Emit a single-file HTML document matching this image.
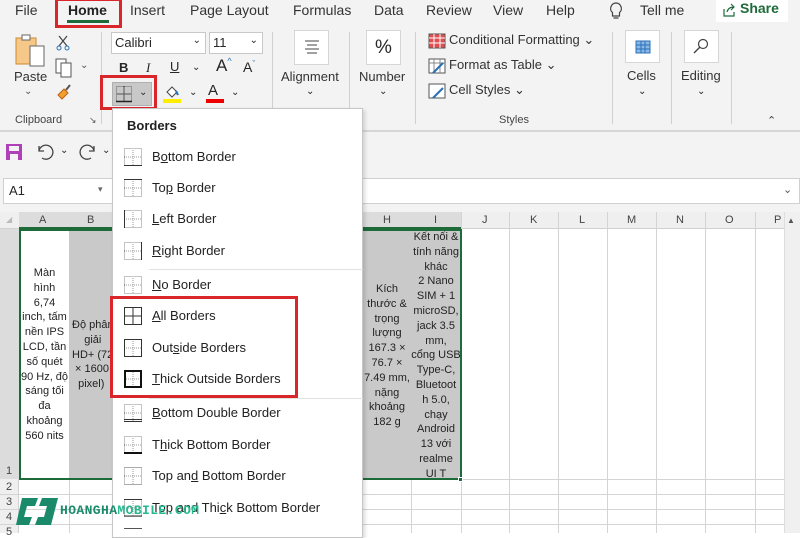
<!DOCTYPE html>
<html><head><meta charset="utf-8"><style>
*{margin:0;padding:0;box-sizing:border-box}
body{width:800px;height:533px;overflow:hidden;position:relative;background:#fff;font-family:"Segoe UI","Liberation Sans","DejaVu Sans",sans-serif;color:#262626}
.a{position:absolute}
.t{font-size:14px;color:#333}
.rb{border:3px solid #d9262b}
.cell{position:absolute;font-size:11px;line-height:14.8px;text-align:center;color:#222}
.mi{position:absolute;left:152px;font-size:13px;color:#222}
.ic{position:absolute;left:124px}
.grid{position:absolute;background:#d4d4d4}
</style></head><body>
<div class="a" style="left:0;top:0;width:800px;height:206px;background:#f3f3f3"></div>
<div class="a t" style="left:15px;top:2px">File</div>
<div class="a t" style="left:68px;top:2px;font-weight:bold;color:#222">Home</div>
<div class="a" style="left:67px;top:20px;width:42px;height:3px;background:#1e6b3a"></div>
<div class="a rb" style="left:55px;top:-2px;width:67px;height:30px"></div>
<div class="a t" style="left:130px;top:2px">Insert</div>
<div class="a t" style="left:190px;top:2px">Page Layout</div>
<div class="a t" style="left:293px;top:2px">Formulas</div>
<div class="a t" style="left:374px;top:2px">Data</div>
<div class="a t" style="left:426px;top:2px">Review</div>
<div class="a t" style="left:493px;top:2px">View</div>
<div class="a t" style="left:546px;top:2px">Help</div>
<svg class="a" style="left:609px;top:2px" width="14" height="18"><path d="M7 1a5.5 5.5 0 0 0-3.5 9.6V14h7v-3.4A5.5 5.5 0 0 0 7 1zM4.5 16h5" fill="none" stroke="#444" stroke-width="1.2"/></svg>
<div class="a t" style="left:640px;top:2px">Tell me</div>
<div class="a" style="left:716px;top:-2px;width:72px;height:24px;background:#fff;border-radius:2px"></div>
<svg class="a" style="left:722px;top:3px" width="14" height="14"><path d="M2 6v7h10V9M5 9c1-4 4-5 7-5M9 1l3 3-3 3" fill="none" stroke="#1e6b3a" stroke-width="1.2"/></svg>
<div class="a" style="left:740px;top:0px;font-size:14px;font-weight:bold;color:#1e6b3a">Share</div>
<svg class="a" style="left:14px;top:32px" width="34" height="38"><rect x="2" y="6" width="20" height="26" fill="#f5c88a" stroke="#d08a2a"/><rect x="8" y="3" width="8" height="5" fill="#fff" stroke="#666"/><rect x="16" y="14" width="14" height="20" fill="#fff" stroke="#666"/></svg>
<div class="a" style="left:14px;top:69px;font-size:13px;color:#333">Paste</div>
<div class="a" style="left:24px;top:86px;font-size:10px;color:#555">⌄</div>
<svg class="a" style="left:56px;top:35px" width="14" height="16"><path d="M3 1l8 10M11 1L3 11" stroke="#444" stroke-width="1.2"/><circle cx="3" cy="13" r="2" fill="none" stroke="#2a6fb5"/><circle cx="11" cy="13" r="2" fill="none" stroke="#2a6fb5"/></svg>
<svg class="a" style="left:55px;top:58px" width="18" height="20"><rect x="1" y="1" width="10" height="14" fill="#fff" stroke="#555"/><rect x="6" y="5" width="10" height="14" fill="#fff" stroke="#555"/></svg>
<div class="a" style="left:80px;top:60px;font-size:10px;color:#555">⌄</div>
<svg class="a" style="left:56px;top:83px" width="16" height="18"><path d="M2 12l6-6 4 4-6 6z" fill="#f0a030" stroke="#c06010"/><path d="M10 7l4-5" stroke="#555" stroke-width="2"/></svg>
<div class="a" style="left:15px;top:114px;font-size:11px;color:#444">Clipboard</div>
<div class="a" style="left:89px;top:115px;font-size:9px;color:#555">↘</div>
<div class="a" style="left:101px;top:32px;width:1px;height:92px;background:#d0d0d0"></div>
<div class="a" style="left:111px;top:32px;width:95px;height:22px;background:#fff;border:1px solid #c8c8c8;font-size:13px;padding:2px 3px">Calibri<span style="position:absolute;right:4px;font-size:10px">⌄</span></div>
<div class="a" style="left:209px;top:32px;width:54px;height:22px;background:#fff;border:1px solid #c8c8c8;font-size:13px;padding:2px 3px">11<span style="position:absolute;right:4px;font-size:10px">⌄</span></div>
<div class="a" style="left:119px;top:60px;font-size:13px;font-weight:bold">B</div>
<div class="a" style="left:146px;top:60px;font-size:13px;font-style:italic;font-family:'Liberation Serif',serif">I</div>
<div class="a" style="left:170px;top:59px;font-size:13px;text-decoration:underline">U</div>
<div class="a" style="left:192px;top:62px;font-size:10px">⌄</div>
<div class="a" style="left:216px;top:56px;font-size:17px">A<span style="font-size:9px;color:#2a6fb5;vertical-align:top">^</span></div>
<div class="a" style="left:243px;top:59px;font-size:14px">A<span style="font-size:9px;color:#2a6fb5;vertical-align:top">ˇ</span></div>
<div class="a" style="left:112px;top:82px;width:40px;height:24px;background:#c8c8c8;border:1px solid #b0b0b0"></div>
<svg class="a" style="left:115px;top:85px" width="18" height="18"><rect x="1.5" y="1.5" width="15" height="15" fill="none" stroke="#666" stroke-dasharray="1 1"/><path d="M9 1v16M1 9h16" stroke="#555"/><path d="M1 16.5h16" stroke="#222" stroke-width="1.5"/></svg>
<div class="a" style="left:139px;top:87px;font-size:10px">⌄</div>
<div class="a rb" style="left:100px;top:75px;width:57px;height:35px"></div>
<svg class="a" style="left:163px;top:84px" width="18" height="20"><path d="M4 8l5-5 5 5-5 5z" fill="#fff" stroke="#444"/><path d="M13 7l2 4" stroke="#2a6fb5" stroke-width="2"/><rect x="0" y="15" width="18" height="4" fill="#ffee00"/></svg>
<div class="a" style="left:189px;top:87px;font-size:10px">⌄</div>
<div class="a" style="left:208px;top:82px;font-size:15px">A</div>
<div class="a" style="left:206px;top:99px;width:18px;height:4px;background:#e00"></div>
<div class="a" style="left:231px;top:87px;font-size:10px">⌄</div>
<div class="a" style="left:272px;top:32px;width:1px;height:92px;background:#d0d0d0"></div>
<div class="a" style="left:294px;top:30px;width:35px;height:35px;background:#fff;border:1px solid #d6d6d6"></div>
<svg class="a" style="left:303px;top:39px" width="18" height="16"><path d="M2 2h14M4 6h10M2 10h14M4 14h10" stroke="#444"/></svg>
<div class="a" style="left:281px;top:69px;font-size:13px;color:#333">Alignment</div>
<div class="a" style="left:306px;top:86px;font-size:10px">⌄</div>
<div class="a" style="left:349px;top:32px;width:1px;height:92px;background:#d0d0d0"></div>
<div class="a" style="left:366px;top:30px;width:35px;height:35px;background:#fff;border:1px solid #d6d6d6;font-size:19px;text-align:center;line-height:33px">%</div>
<div class="a" style="left:359px;top:69px;font-size:13px;color:#333">Number</div>
<div class="a" style="left:379px;top:86px;font-size:10px">⌄</div>
<div class="a" style="left:415px;top:32px;width:1px;height:92px;background:#d0d0d0"></div>
<svg class="a" style="left:428px;top:33px" width="18" height="16"><rect x="1" y="1" width="16" height="14" fill="#e05050" stroke="#555"/><path d="M1 5h16M1 10h16M6 1v14M12 1v14" stroke="#fff"/></svg>
<div class="a" style="left:449px;top:32px;font-size:13px;color:#333">Conditional Formatting ⌄</div>
<svg class="a" style="left:428px;top:58px" width="18" height="16"><rect x="1" y="1" width="16" height="14" fill="#fff" stroke="#555"/><path d="M1 5h16M6 1v14M12 1v14" stroke="#888"/><path d="M5 15l10-10" stroke="#2a6fb5" stroke-width="2"/></svg>
<div class="a" style="left:449px;top:57px;font-size:13px;color:#333">Format as Table ⌄</div>
<svg class="a" style="left:428px;top:83px" width="18" height="16"><rect x="1" y="1" width="16" height="14" fill="#fff" stroke="#555"/><path d="M5 15l10-10" stroke="#2a6fb5" stroke-width="2"/></svg>
<div class="a" style="left:449px;top:82px;font-size:13px;color:#333">Cell Styles ⌄</div>
<div class="a" style="left:499px;top:114px;font-size:11px;color:#444">Styles</div>
<div class="a" style="left:612px;top:32px;width:1px;height:92px;background:#d0d0d0"></div>
<div class="a" style="left:625px;top:30px;width:35px;height:33px;background:#fff;border:1px solid #d6d6d6"></div>
<svg class="a" style="left:634px;top:38px" width="18" height="16"><rect x="2" y="3" width="14" height="12" fill="#8ab8e8" stroke="#2a6fb5"/><path d="M2 7h14M2 11h14M7 3v12M11 3v12" stroke="#2a6fb5"/></svg>
<div class="a" style="left:627px;top:68px;font-size:13px;color:#333">Cells</div>
<div class="a" style="left:638px;top:86px;font-size:10px">⌄</div>
<div class="a" style="left:671px;top:32px;width:1px;height:92px;background:#d0d0d0"></div>
<div class="a" style="left:684px;top:30px;width:35px;height:33px;background:#fff;border:1px solid #d6d6d6"></div>
<svg class="a" style="left:692px;top:38px" width="18" height="18"><circle cx="11" cy="6" r="4.5" fill="none" stroke="#444" stroke-width="1.2"/><path d="M8 9l-6 6" stroke="#444" stroke-width="1.4"/></svg>
<div class="a" style="left:681px;top:68px;font-size:13px;color:#333">Editing</div>
<div class="a" style="left:697px;top:86px;font-size:10px">⌄</div>
<div class="a" style="left:731px;top:32px;width:1px;height:92px;background:#d0d0d0"></div>
<div class="a" style="left:767px;top:114px;font-size:11px;color:#444">⌃</div>
<div class="a" style="left:0;top:130px;width:800px;height:2px;background:#d6d6d6"></div>
<svg class="a" style="left:5px;top:143px" width="18" height="18"><rect x="1" y="1" width="16" height="16" fill="#b040b8"/><rect x="4" y="3" width="10" height="5" fill="#f3f3f3"/><rect x="5" y="11" width="8" height="6" fill="#f3f3f3"/></svg>
<svg class="a" style="left:35px;top:142px" width="20" height="18"><path d="M4 4v5h5M4 9a7 7 0 1 1 3 7" fill="none" stroke="#444" stroke-width="1.3"/></svg>
<div class="a" style="left:60px;top:145px;font-size:10px">⌄</div>
<svg class="a" style="left:78px;top:142px" width="20" height="18"><path d="M16 4v5h-5M16 9a7 7 0 1 0-3 7" fill="none" stroke="#444" stroke-width="1.3"/></svg>
<div class="a" style="left:102px;top:145px;font-size:10px">⌄</div>
<div class="a" style="left:3px;top:178px;width:797px;height:26px;background:#fff;border:1px solid #d0d0d0"></div>
<div class="a" style="left:9px;top:183px;font-size:13px">A1</div>
<div class="a" style="left:98px;top:184px;font-size:9px;color:#666">▾</div>
<div class="a" style="left:783px;top:183px;font-size:11px;color:#555">⌄</div>
<div class="a" style="left:0;top:206px;width:800px;height:23px;background:#f3f3f3"></div>
<div class="a" style="left:0;top:212px;width:800px;height:17px;background:#efefef;border-bottom:1px solid #d0d0d0"></div>
<div class="a" style="left:19px;top:212px;width:442px;height:17px;background:#dcdcdc;border-bottom:2px solid #1e6b3a"></div>
<div class="a" style="left:0;top:229px;width:19px;height:304px;background:#efefef;border-right:1px solid #d0d0d0"></div>
<div class="a" style="left:0;top:229px;width:19px;height:250px;background:#dcdcdc"></div>
<div class="a" style="left:6px;top:215px;font-size:8px;color:#bbb">◢</div>
<div style="font-size:11px;color:#444">
<div class="a" style="left:39px;top:214px">A</div><div class="a" style="left:87px;top:214px">B</div>
<div class="a" style="left:383px;top:214px">H</div><div class="a" style="left:434px;top:214px">I</div>
<div class="a" style="left:482px;top:214px">J</div><div class="a" style="left:530px;top:214px">K</div>
<div class="a" style="left:579px;top:214px">L</div><div class="a" style="left:627px;top:214px">M</div>
<div class="a" style="left:676px;top:214px">N</div><div class="a" style="left:725px;top:214px">O</div>
<div class="a" style="left:774px;top:214px">P</div>
<div class="a" style="left:6px;top:465px">1</div><div class="a" style="left:6px;top:481px">2</div>
<div class="a" style="left:6px;top:496px">3</div><div class="a" style="left:6px;top:511px">4</div><div class="a" style="left:6px;top:526px">5</div>
</div>
<div class="a" style="left:784px;top:212px;width:16px;height:321px;background:#f0f0f0;border-left:1px solid #ddd"></div>
<div class="a" style="left:787px;top:216px;font-size:8px;color:#555">▲</div>
<div class="grid" style="left:69px;top:229px;width:1px;height:304px"></div>
<div class="grid" style="left:411px;top:229px;width:1px;height:304px"></div>
<div class="grid" style="left:461px;top:212px;width:1px;height:321px"></div>
<div class="grid" style="left:509px;top:212px;width:1px;height:321px"></div>
<div class="grid" style="left:558px;top:212px;width:1px;height:321px"></div>
<div class="grid" style="left:607px;top:212px;width:1px;height:321px"></div>
<div class="grid" style="left:656px;top:212px;width:1px;height:321px"></div>
<div class="grid" style="left:705px;top:212px;width:1px;height:321px"></div>
<div class="grid" style="left:755px;top:212px;width:1px;height:321px"></div>
<div class="grid" style="left:0;top:494px;width:784px;height:1px"></div>
<div class="grid" style="left:0;top:509px;width:784px;height:1px"></div>
<div class="grid" style="left:0;top:524px;width:784px;height:1px"></div>
<div class="grid" style="left:461px;top:479px;width:323px;height:1px"></div>
<div class="a" style="left:69px;top:229px;width:43px;height:250px;background:#c9c9c9"></div>
<div class="a" style="left:363px;top:229px;width:98px;height:250px;background:#c9c9c9"></div>
<div class="cell" style="left:20px;top:266px;width:49px">Màn<br>hình<br>6,74<br>inch, tấm<br>nền IPS<br>LCD, tần<br>số quét<br>90 Hz, độ<br>sáng tối<br>đa<br>khoảng<br>560 nits</div>
<div class="cell" style="left:70px;top:318px;width:60px;text-align:left;padding-left:2px">Độ phân<br>&nbsp;&nbsp;&nbsp;&nbsp;giải<br>HD+ (720<br>&nbsp;× 1600<br>&nbsp;&nbsp;pixel)</div>
<div class="cell" style="left:362px;top:282px;width:50px">Kích<br>thước &amp;<br>trọng<br>lượng<br>167.3 ×<br>76.7 ×<br>7.49 mm,<br>nặng<br>khoảng<br>182 g</div>
<div class="cell" style="left:411px;top:230px;width:50px;overflow:hidden;height:249px">Kết nối &amp;<br>tính năng<br>khác<br>2 Nano<br>SIM + 1<br>microSD,<br>jack 3.5<br>mm,<br>cổng USB<br>Type-C,<br>Bluetoot<br>h 5.0,<br>chạy<br>Android<br>13 với<br>realme<br>UI T</div>
<div class="a" style="left:19px;top:229px;width:443px;height:251px;border:2px solid #1e6b3a"></div>
<div class="a" style="left:458px;top:477px;width:5px;height:5px;background:#1e6b3a;border:1px solid #fff"></div>
<div class="a" style="left:112px;top:108px;width:251px;height:430px;background:#fff;border:1px solid #c6c6c6;box-shadow:2px 2px 4px rgba(0,0,0,.15)">
<div class="a" style="left:14px;top:9px;font-size:13px;font-weight:bold;color:#222">Borders</div>
<div class="a" style="left:36px;top:160px;width:214px;height:1px;background:#e2e2e2"></div>
<div class="a" style="left:36px;top:289px;width:214px;height:1px;background:#e2e2e2"></div>
</div>
<div class="a rb" style="left:110px;top:296px;width:188px;height:102px"></div>
<svg class="a" style="left:0;top:0" width="800" height="533">
<defs><g id="d"><rect x="0.5" y="0.5" width="17" height="17" fill="none" stroke="#888" stroke-dasharray="1 1"/><path d="M9 0v18M0 9h18" stroke="#999" stroke-dasharray="1 1"/></g></defs>
<g transform="translate(124,148)"><use href="#d"/><path d="M0 17.5h18" stroke="#333"/></g>
<g transform="translate(124,179)"><use href="#d"/><path d="M0 .5h18" stroke="#333"/></g>
<g transform="translate(124,210)"><use href="#d"/><path d="M.5 0v18" stroke="#333"/></g>
<g transform="translate(124,242)"><use href="#d"/><path d="M17.5 0v18" stroke="#333"/></g>
<g transform="translate(124,276)"><use href="#d"/></g>
<g transform="translate(124,307)"><rect x=".5" y=".5" width="17" height="17" fill="none" stroke="#333"/><path d="M9 0v18M0 9h18" stroke="#333"/></g>
<g transform="translate(124,339)"><use href="#d"/><rect x=".5" y=".5" width="17" height="17" fill="none" stroke="#333"/></g>
<g transform="translate(124,370)"><use href="#d"/><rect x="1" y="1" width="16" height="16" fill="none" stroke="#111" stroke-width="2"/></g>
<g transform="translate(124,404)"><use href="#d"/><path d="M0 15.5h18M0 17.5h18" stroke="#333"/></g>
<g transform="translate(124,436)"><use href="#d"/><path d="M0 17h18" stroke="#111" stroke-width="2"/></g>
<g transform="translate(124,467)"><use href="#d"/><path d="M0 .5h18M0 17.5h18" stroke="#aaa"/></g>
<g transform="translate(124,499)"><use href="#d"/><path d="M0 .5h18M0 17h18" stroke="#333"/></g>
<g transform="translate(124,528)"><path d="M0 .5h18" stroke="#555"/></g>
</svg>
<div class="mi" style="top:149px">B<u>o</u>ttom Border</div>
<div class="mi" style="top:180px">To<u>p</u> Border</div>
<div class="mi" style="top:211px"><u>L</u>eft Border</div>
<div class="mi" style="top:243px"><u>R</u>ight Border</div>
<div class="mi" style="top:277px"><u>N</u>o Border</div>
<div class="mi" style="top:308px"><u>A</u>ll Borders</div>
<div class="mi" style="top:340px">Out<u>s</u>ide Borders</div>
<div class="mi" style="top:371px"><u>T</u>hick Outside Borders</div>
<div class="mi" style="top:405px"><u>B</u>ottom Double Border</div>
<div class="mi" style="top:437px">T<u>h</u>ick Bottom Border</div>
<div class="mi" style="top:468px">Top an<u>d</u> Bottom Border</div>
<div class="mi" style="top:500px">Top and Thi<u>c</u>k Bottom Border</div>
<!-- logo on top -->
<svg class="a" style="left:16px;top:498px" width="42" height="27"><path d="M6 0h16l-3 8h-8l-3 11h8l-3 8H0z" fill="#1a8a6a"/><path d="M26 0h16l-7 27H19l3-8h6l3-11h-8z" fill="#1a8a6a"/></svg>
<div class="a" style="left:60px;top:503px;font-size:13px;font-weight:bold;letter-spacing:0.4px;color:#1a8a6a;font-family:'Liberation Mono',monospace">HOANGHA<span style="color:#28b890">MOBILE.COM</span></div>
</body></html>
